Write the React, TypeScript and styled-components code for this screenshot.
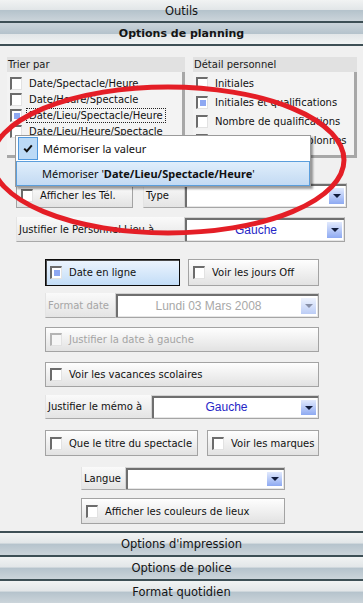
import React from 'react'
import styled, { createGlobalStyle, css } from 'styled-components'

const uiFont = `"DejaVu Sans", Verdana, sans-serif`
const valueFont = `"Liberation Sans", Arial, sans-serif`
const menuFont = `"Noto Sans", "DejaVu Sans", sans-serif`

const GlobalStyle = createGlobalStyle`
  html, body {
    margin: 0;
    padding: 0;
    background: #f0f0f0;
  }
`

export default function App() {
  return (
    <>
      <GlobalStyle />
      <Page>
        <SectionBar>Outils</SectionBar>
        <SectionBar $active>Options de planning</SectionBar>

        <Content>
          <Groups>
            <GroupBox $w={178}>
              <GroupTitle>Trier par</GroupTitle>
              <GroupBody $pt={3}>
                <OptionRow $h={16}>
                  <Check />
                  Date/Spectacle/Heure
                </OptionRow>
                <OptionRow $h={16}>
                  <Check />
                  Date/Heure/Spectacle
                </OptionRow>
                <OptionRow $h={16}>
                  <Check $checked />
                  <FocusText>Date/Lieu/Spectacle/Heure</FocusText>
                </OptionRow>
                <OptionRow $h={16}>
                  <Check />
                  Date/Lieu/Heure/Spectacle
                </OptionRow>
              </GroupBody>
            </GroupBox>
            <GroupBox $w={164}>
              <GroupTitle>Détail personnel</GroupTitle>
              <GroupBody $pt={2}>
                <OptionRow $h={19}>
                  <Check />
                  Initiales
                </OptionRow>
                <OptionRow $h={19}>
                  <Check $checked />
                  Initiales et qualifications
                </OptionRow>
                <OptionRow $h={19}>
                  <Check />
                  Nombre de qualifications
                </OptionRow>
                <OptionRow $h={19}>
                  <Check />
                  Qualifications en colonnes
                </OptionRow>
              </GroupBody>
            </GroupBox>
          </Groups>

          <FormBlock $indent={16} $mt={25}>
            <FormRow $h={25} $gap={10}>
              <ToggleButton $w={117}>
                <Check />
                Afficher les Tél.
              </ToggleButton>
              <Field>
                <FieldLabel $w={41}>Type</FieldLabel>
                <Combo $w={163}>
                  <ComboValue />
                  <DropButton />
                </Combo>
              </Field>
            </FormRow>
            <FormRow $h={25} $mt={9}>
              <Field>
                <FieldLabel $w={168}>Justifier le Personnel Lieu à</FieldLabel>
                <Combo $w={161}>
                  <ComboValue>Gauche</ComboValue>
                  <DropButton />
                </Combo>
              </Field>
            </FormRow>
          </FormBlock>

          <FormBlock $indent={45} $mt={17}>
            <FormRow $h={27} $gap={8}>
              <ToggleButton $w={135} $pressed>
                <Check $checked />
                Date en ligne
              </ToggleButton>
              <ToggleButton $w={131}>
                <Check />
                Voir les jours Off
              </ToggleButton>
            </FormRow>
            <FormRow $h={25} $mt={7}>
              <Field>
                <FieldLabel $w={70} $disabled>
                  Format date
                </FieldLabel>
                <Combo $w={204}>
                  <ComboValue $disabled>Lundi 03 Mars 2008</ComboValue>
                  <DropButton $disabled />
                </Combo>
              </Field>
            </FormRow>
            <FormRow $h={25} $mt={9}>
              <ToggleButton $w={274} $disabled>
                <Check $disabled />
                Justifier la date à gauche
              </ToggleButton>
            </FormRow>
            <FormRow $h={25} $mt={10}>
              <ToggleButton $w={274}>
                <Check />
                Voir les vacances scolaires
              </ToggleButton>
            </FormRow>
            <FormRow $h={24} $mt={8}>
              <Field>
                <FieldLabel $w={106}>Justifier le mémo à</FieldLabel>
                <Combo $w={168}>
                  <ComboValue>Gauche</ComboValue>
                  <DropButton />
                </Combo>
              </Field>
            </FormRow>
            <FormRow $h={26} $mt={11} $gap={9}>
              <ToggleButton $w={153}>
                <Check />
                Que le titre du spectacle
              </ToggleButton>
              <ToggleButton $w={112}>
                <Check />
                Voir les marques
              </ToggleButton>
            </FormRow>
            <FormRow $h={23} $mt={11} $indent={36}>
              <Field>
                <FieldLabel $w={44}>Langue</FieldLabel>
                <Combo $w={160}>
                  <ComboValue />
                  <DropButton />
                </Combo>
              </Field>
            </FormRow>
            <FormRow $h={26} $mt={8} $indent={36}>
              <ToggleButton $w={204}>
                <Check />
                Afficher les couleurs de lieux
              </ToggleButton>
            </FormRow>
          </FormBlock>
        </Content>

        <SectionBar $bottom>Options d'impression</SectionBar>
        <SectionBar $bottom>Options de police</SectionBar>
        <SectionBar $bottom>Format quotidien</SectionBar>

        <Popup>
          <MenuItem $pl={1}>
            <MenuCheck>
              <svg width="10" height="9" viewBox="0 0 10 9">
                <path d="M1.2 4.6 L3.8 7.2 L8.8 1.4" fill="none" stroke="#111" strokeWidth="2" />
              </svg>
            </MenuCheck>
            <span>Mémoriser la valeur</span>
          </MenuItem>
          <MenuItem $pl={25} $hot>
            <span>
              Mémoriser '<b>Date/Lieu/Spectacle/Heure</b>'
            </span>
          </MenuItem>
        </Popup>

        <Annotation width="363" height="603" viewBox="0 0 363 603">
          <ellipse cx="168" cy="160" rx="176" ry="73" fill="none" stroke="#e41e26" strokeWidth="5" />
        </Annotation>
      </Page>
    </>
  )
}

const Page = styled.div`
  position: relative;
  width: 363px;
  height: 603px;
  overflow: hidden;
  display: flex;
  flex-direction: column;
  font-family: ${uiFont};
  font-size: 10px;
  color: #111;
  background: #f0f0f0;
`
const SectionBar = styled.div<{ $active?: boolean; $bottom?: boolean }>`
  box-sizing: border-box;
  flex-shrink: 0;
  height: ${(p) => (p.$bottom ? 24 : 23)}px;
  display: flex;
  align-items: center;
  justify-content: center;
  font: ${(p) => (p.$active ? 'bold 11px' : '11.5px')} ${uiFont};
  color: #141414;
  background: linear-gradient(
    ${(p) => (p.$active ? 'to top' : 'to bottom')},
    #f1f3f3 0%,
    #e2e6e8 46%,
    #b5c3cc 50%,
    #cbd4da 100%
  );
  ${(p) => (p.$bottom ? 'border-top' : 'border-bottom')}: 2px solid #3d4f55;
`
const Content = styled.div`
  flex: 1;
  overflow: hidden;
  padding-top: 11px;
  display: flex;
  flex-direction: column;
`
const Groups = styled.div`
  display: flex;
  gap: 8px;
  height: 101px;
  padding-left: 7px;
`
const GroupBox = styled.div<{ $w: number }>`
  width: ${(p) => p.$w}px;
  display: flex;
  flex-direction: column;
`
const GroupTitle = styled.div`
  height: 15px;
  line-height: 15px;
  padding-left: 1px;
  background: #e1e1e1;
  color: #1a1a1a;
`
const GroupBody = styled.div<{ $pt: number }>`
  flex: 1;
  padding-top: ${(p) => p.$pt}px;
  background: #f3f3f3;
  border-right: 3px solid #a7a7a7;
  border-bottom: 3px solid #a7a7a7;
`
const OptionRow = styled.div<{ $h: number }>`
  height: ${(p) => p.$h}px;
  display: flex;
  align-items: center;
  gap: 7px;
  padding-left: 3px;
  white-space: nowrap;
`
const Check = styled.span<{ $checked?: boolean; $disabled?: boolean }>`
  box-sizing: border-box;
  flex-shrink: 0;
  width: 12px;
  height: 13px;
  display: flex;
  align-items: center;
  justify-content: center;
  background: ${(p) => (p.$disabled ? '#f6f6f6' : '#fff')};
  border-top: 2px solid ${(p) => (p.$disabled ? '#b4b4b4' : '#6c6c6c')};
  border-left: 2px solid ${(p) => (p.$disabled ? '#b4b4b4' : '#6c6c6c')};
  border-right: 1px solid #e2e2e2;
  border-bottom: 1px solid #e2e2e2;
  &::after {
    content: '';
    display: ${(p) => (p.$checked ? 'block' : 'none')};
    width: 6px;
    height: 6px;
    background: #8ea8f2;
  }
`
const FocusText = styled.span`
  outline: 1px dotted #222;
  padding: 1px 2px;
  margin-left: -2px;
`
const FormBlock = styled.div<{ $indent: number; $mt: number }>`
  display: flex;
  flex-direction: column;
  padding-left: ${(p) => p.$indent}px;
  margin-top: ${(p) => p.$mt}px;
`
const FormRow = styled.div<{ $h: number; $mt?: number; $gap?: number; $indent?: number }>`
  display: flex;
  height: ${(p) => p.$h}px;
  margin-top: ${(p) => p.$mt ?? 0}px;
  padding-left: ${(p) => p.$indent ?? 0}px;
  gap: ${(p) => p.$gap ?? 0}px;
`
const ToggleButton = styled.div<{ $w: number; $pressed?: boolean; $disabled?: boolean }>`
  box-sizing: border-box;
  width: ${(p) => p.$w}px;
  height: 100%;
  display: flex;
  align-items: center;
  gap: 7px;
  padding-left: 4px;
  white-space: nowrap;
  color: ${(p) => (p.$disabled ? '#a4a4a4' : '#111')};
  border: 1px solid #a3a3a3;
  background: linear-gradient(#fefefe, #e2e2e2);
  ${(p) =>
    p.$pressed &&
    css`
      border-color: #0c0c0c;
      box-shadow: inset 1px 1px 0 #4a4a4a;
      background: linear-gradient(#edf5fe, #c3ddf7);
    `}
`
const Field = styled.div`
  display: flex;
  height: 100%;
`
const FieldLabel = styled.div<{ $w: number; $disabled?: boolean }>`
  box-sizing: border-box;
  width: ${(p) => p.$w}px;
  height: 100%;
  display: flex;
  align-items: center;
  padding-left: 2px;
  white-space: nowrap;
  color: ${(p) => (p.$disabled ? '#a6a6a6' : '#111')};
  background: linear-gradient(#fafafa, #e4e4e4);
  border-left: 1px solid #e4e4e4;
  border-bottom: 1px solid #a9a9a9;
`
const Combo = styled.div<{ $w: number }>`
  box-sizing: border-box;
  width: ${(p) => p.$w}px;
  height: 100%;
  display: flex;
  background: #fff;
  border: 1px solid;
  border-color: #d2d2d2 #a5a5a5 #a5a5a5 #d2d2d2;
  box-shadow: inset 2px 2px 0 #6f6f6f, inset -1px -1px 0 #e6e6e6;
`
const ComboValue = styled.span<{ $disabled?: boolean }>`
  flex: 1;
  display: flex;
  align-items: center;
  justify-content: center;
  font: 12px ${valueFont};
  color: ${(p) => (p.$disabled ? '#a8a8a8' : '#2626c6')};
`
const DropButton = styled.span<{ $disabled?: boolean }>`
  width: 15px;
  margin: 4px 2px 3px 0;
  display: flex;
  align-items: center;
  justify-content: center;
  background: ${(p) =>
    p.$disabled ? 'linear-gradient(#eef3fe, #bccdf6)' : 'linear-gradient(#e2eafd, #8eaaf2)'};
  &::after {
    content: '';
    border-left: 4px solid transparent;
    border-right: 4px solid transparent;
    border-top: 4px solid ${(p) => (p.$disabled ? '#8890a8' : '#111c3c')};
  }
`
const Popup = styled.div`
  position: absolute;
  left: 15px;
  top: 135px;
  width: 296px;
  box-sizing: border-box;
  display: flex;
  flex-direction: column;
  background: #fff;
  border: 1px solid #9a9a9a;
  box-shadow: 2px 2px 2px rgba(0, 0, 0, 0.38);
  font: 11px ${menuFont};
  color: #111;
`
const MenuItem = styled.div<{ $pl: number; $hot?: boolean }>`
  box-sizing: border-box;
  height: 25px;
  display: flex;
  align-items: center;
  gap: 5px;
  padding-left: ${(p) => p.$pl}px;
  border: 1px solid transparent;
  white-space: nowrap;
  ${(p) =>
    p.$hot &&
    css`
      border-color: #5b9edc;
      background: linear-gradient(#e0eefb, #c3daf3);
    `}
  b {
    font-weight: bold;
  }
`
const MenuCheck = styled.span`
  box-sizing: border-box;
  width: 20px;
  height: 23px;
  display: flex;
  align-items: center;
  justify-content: center;
  border: 1px solid #4f97dc;
  background: #bcdaf6;
`
const Annotation = styled.svg`
  position: absolute;
  left: 0;
  top: 0;
  pointer-events: none;
`
